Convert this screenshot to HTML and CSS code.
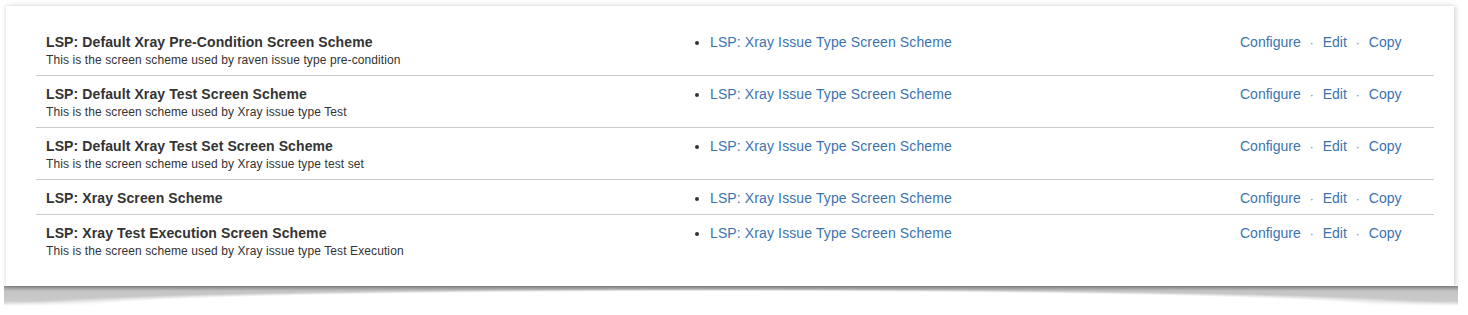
FILE: index.html
```html
<!DOCTYPE html>
<html lang="en">
<head>
    <meta charset="UTF-8">
    <title>Screen Schemes</title>
    <link rel="stylesheet" href="styles.css">
</head>
<body>
    <div class="card">
        <table class="schemes">
            <tbody>
                <tr>
                    <td class="name">
                        <strong>LSP: Default Xray Pre-Condition Screen Scheme</strong>
                        <div class="desc">This is the screen scheme used by raven issue type pre-condition</div>
                    </td>
                    <td class="types">
                        <ul><li><a href="#">LSP: Xray Issue Type Screen Scheme</a></li></ul>
                    </td>
                    <td class="ops">
                        <a href="#">Configure</a><span class="sep">·</span><a href="#">Edit</a><span class="sep">·</span><a href="#">Copy</a>
                    </td>
                </tr>
                <tr>
                    <td class="name">
                        <strong>LSP: Default Xray Test Screen Scheme</strong>
                        <div class="desc">This is the screen scheme used by Xray issue type Test</div>
                    </td>
                    <td class="types">
                        <ul><li><a href="#">LSP: Xray Issue Type Screen Scheme</a></li></ul>
                    </td>
                    <td class="ops">
                        <a href="#">Configure</a><span class="sep">·</span><a href="#">Edit</a><span class="sep">·</span><a href="#">Copy</a>
                    </td>
                </tr>
                <tr>
                    <td class="name">
                        <strong>LSP: Default Xray Test Set Screen Scheme</strong>
                        <div class="desc">This is the screen scheme used by Xray issue type test set</div>
                    </td>
                    <td class="types">
                        <ul><li><a href="#">LSP: Xray Issue Type Screen Scheme</a></li></ul>
                    </td>
                    <td class="ops">
                        <a href="#">Configure</a><span class="sep">·</span><a href="#">Edit</a><span class="sep">·</span><a href="#">Copy</a>
                    </td>
                </tr>
                <tr>
                    <td class="name">
                        <strong>LSP: Xray Screen Scheme</strong>
                    </td>
                    <td class="types">
                        <ul><li><a href="#">LSP: Xray Issue Type Screen Scheme</a></li></ul>
                    </td>
                    <td class="ops">
                        <a href="#">Configure</a><span class="sep">·</span><a href="#">Edit</a><span class="sep">·</span><a href="#">Copy</a>
                    </td>
                </tr>
                <tr>
                    <td class="name">
                        <strong>LSP: Xray Test Execution Screen Scheme</strong>
                        <div class="desc">This is the screen scheme used by Xray issue type Test Execution</div>
                    </td>
                    <td class="types">
                        <ul><li><a href="#">LSP: Xray Issue Type Screen Scheme</a></li></ul>
                    </td>
                    <td class="ops">
                        <a href="#">Configure</a><span class="sep">·</span><a href="#">Edit</a><span class="sep">·</span><a href="#">Copy</a>
                    </td>
                </tr>
            </tbody>
        </table>
    </div>
    <div class="curl"></div>
</body>
</html>
```

FILE: styles.css
```css
body {
    font-family: "Liberation Sans", Arial, sans-serif;
    font-size: 14px;
    color: #333;
    background: #fff;
    margin: 0;
    padding: 6px 14px 0 6px;
}
.card {
    position: relative;
    background: #fff;
    height: 280px;
    box-sizing: border-box;
    padding: 18px 20px 0 30px;
    box-shadow: 2px 0 5px rgba(0, 0, 0, 0.16), -1px 0 3px rgba(0, 0, 0, 0.08);
}
/* curled shadow under the card */
.curl {
    height: 20px;
    margin: 0 -4px 0 -2px;
    background:
        radial-gradient(50% 17px at 50% 100%, #fff 86%, rgba(255, 255, 255, 0) 100%),
        linear-gradient(to bottom, #8a8a8a, #c4c4c4 25%, #cbcbcb 75%, #fff);
}
table {
    width: 100%;
    border-collapse: collapse;
}
td {
    padding: 9px 10px 7px;
    vertical-align: top;
    line-height: 18px;
}
tr + tr td {
    border-top: 1px solid #ccc;
}
td.name {
    width: 604px;
}
td.name strong {
    font-weight: bold;
    color: #333;
    letter-spacing: 0.1px;
}
.desc {
    font-size: 12px;
    line-height: 16px;
    margin-top: 1px;
    color: #333;
    letter-spacing: 0.1px;
}
td.types {
    width: 550px;
}
ul {
    margin: 0;
    padding-left: 40px;
}
a {
    color: #3b73af;
    text-decoration: none;
}
td.types a {
    letter-spacing: 0.12px;
}
td.ops {
    white-space: nowrap;
}
.sep {
    color: #888;
    margin: 0 9px;
    font-size: 12px;
    line-height: 1;
}
```
